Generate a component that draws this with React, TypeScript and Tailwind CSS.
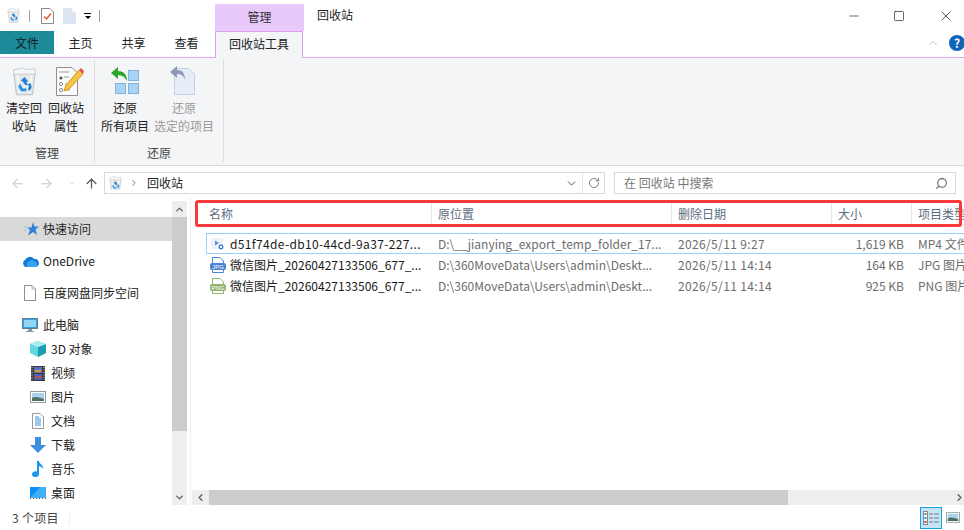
import { ChevronDown, ChevronLeft, ChevronRight, ChevronUp, ArrowLeft, ArrowRight, ArrowUp, RotateCw, Search, Minus, Square, X } from "lucide-react";

const font = "font-['Noto_Sans_CJK_SC','Noto_Sans',sans-serif]";

function RecycleBin({ size = 16 }: { size?: number }) {
  return (
    <svg width={size} height={size * 1.15} viewBox="0 0 28 32">
      <path d="M2 6 L26 6 L23 31 L5 31 Z" fill="#e4e8ea" stroke="#b4babf" />
      <path d="M2 3 L11 1 L17 3 L26 2 L26 8 L2 8 Z" fill="#f5f6f7" stroke="#c4c9cc" />
      <path d="M6 9 L9 29 M22 9 L19 29" stroke="#f7f8f9" strokeWidth="2" />
      <path d="M14 11 L18 16 L16 17 L18 20 L15 20 L12 16 L10 15 Z" fill="#1f7fd6" />
      <path d="M9 18 L12 24 L16 24 L16 27 L10 27 L7 22 Z" fill="#2a92e4" />
      <path d="M21 18 L22 23 L19 27 L18 24 L19 22 L18 19 Z" fill="#1f7fd6" />
    </svg>
  );
}

function DocCheck() {
  return (
    <svg width="13" height="16" viewBox="0 0 13 16">
      <path d="M.5.5H9L12.5 4V15.5H.5Z" fill="#fff" stroke="#8a8a8a" />
      <path d="M3 8.5L5.5 11L10 5.5" fill="none" stroke="#e2572b" strokeWidth="1.4" />
    </svg>
  );
}

function DocBlank({ w = 13, h = 16 }: { w?: number; h?: number }) {
  return (
    <svg width={w} height={h} viewBox="0 0 13 16">
      <path d="M0 0H9V4H13V16H0Z" fill="#dde5f3" />
      <path d="M9 0L13 4H9Z" fill="#f2f5fa" />
    </svg>
  );
}

function Properties() {
  return (
    <svg width="28" height="29" viewBox="0 0 28 29">
      <path d="M.5.5H16L21.5 6V28.5H.5Z" fill="#fafafa" stroke="#8f8f8f" />
      <path d="M3 5H13M8 10H13" stroke="#9a9a9a" />
      <circle cx="5" cy="11" r="1.6" fill="#555" />
      <circle cx="5" cy="17" r="1.6" fill="#fff" stroke="#888" />
      <circle cx="5" cy="23" r="1.6" fill="#fff" stroke="#888" />
      <path d="M9 17H12M9 23H14" stroke="#9a9a9a" />
      <path d="M23 3L27 7L13 22L8 24L10 18Z" fill="#f6c445" stroke="#d49a1f" />
      <path d="M23 3L25 1L28 4L27 7Z" fill="#e2574c" />
    </svg>
  );
}

function RestoreAll() {
  return (
    <svg width="28" height="27" viewBox="0 0 28 27">
      <rect x="17.500" y="3.500" width="10" height="10" fill="#a9d3f5" stroke="#7fb3e0" />
      <rect x="4.500" y="16.500" width="10" height="10" fill="#a9d3f5" stroke="#7fb3e0" />
      <rect x="17.500" y="16.500" width="10" height="10" fill="#a9d3f5" stroke="#7fb3e0" />
      <path d="M7 0L0 6L7 12V8C11 8 14 10 16 14C16 8 13 4 7 4Z" fill="#2ca52c" />
    </svg>
  );
}

function RestoreSelected() {
  return (
    <svg width="25" height="29" viewBox="0 0 25 29">
      <path d="M4.500 2.500H19L24.500 8V28.500H4.500Z" fill="#e6edf8" stroke="#c5d0e0" />
      <path d="M7 0L0 6L7 12V8C11 8 14 10 15 14C15 8 13 4 7 4Z" fill="#8c9bb5" />
    </svg>
  );
}

function RibbonButton({ icon, lines, disabled, width }: { icon: React.ReactNode; lines: string[]; disabled?: boolean; width: string }) {
  return (
    <div className={`flex flex-col items-center ${width}`}>
      <div className="flex h-[30px] items-end justify-center">{icon}</div>
      <div className={`mt-[3px] text-center text-[12px] leading-[18px] whitespace-nowrap ${disabled ? "text-[#9a9a9a]" : "text-[#222]"}`}>
        {lines.map((l) => (
          <div key={l}>{l}</div>
        ))}
      </div>
    </div>
  );
}

function Star() {
  return (
    <svg width="15" height="14" viewBox="0 0 15 14">
      <path d="M9 0L10.5 4.5H15L11.5 7.5L13 13L9 10L4 13.5L6 8L3 5.500H7.500Z" fill="#2f7fd6" />
      <path d="M0 5H3M0 8H3" stroke="#9cc4ee" />
    </svg>
  );
}

function Cloud() {
  return (
    <svg width="17" height="11" viewBox="0 0 17 11">
      <path d="M4 11A4 4 0 0 1 3.500 3.500A5 5 0 0 1 12 3A4 4 0 0 1 13.500 11Z" fill="#0f78d4" />
      <path d="M6 11A3 3 0 0 1 7 5.500A4 4 0 0 1 13.500 6A2.600 2.600 0 0 1 13.500 11Z" fill="#36a3ee" />
    </svg>
  );
}

function PlainDoc() {
  return (
    <svg width="12" height="16" viewBox="0 0 12 16">
      <path d="M.5.5H8L11.500 4V15.500H.5Z" fill="#fff" stroke="#8f8f8f" />
      <path d="M8 .5V4H11.500" fill="none" stroke="#b8b8b8" />
    </svg>
  );
}

function Monitor() {
  return (
    <svg width="16" height="15" viewBox="0 0 16 15">
      <rect x=".5" y=".5" width="15" height="10" fill="#2fa3e6" stroke="#6b7c8c" />
      <rect x="2" y="2" width="12" height="7" fill="#8fd6f7" />
      <path d="M6 11H10V13H12V14H4V13H6Z" fill="#8c98a3" />
    </svg>
  );
}

function Cube() {
  return (
    <svg width="16" height="16" viewBox="0 0 16 16">
      <path d="M8 0L16 3V12L8 16L0 12V3Z" fill="#62d6dc" />
      <path d="M8 6L16 3V12L8 16Z" fill="#1e9db0" />
      <path d="M8 0L16 3L8 6L0 3Z" fill="#a9eef0" />
    </svg>
  );
}

function Film() {
  return (
    <svg width="14" height="15" viewBox="0 0 14 15">
      <rect width="14" height="15" fill="#3b3b3b" />
      <rect x="3" y="1" width="8" height="6" fill="#5a6fc0" />
      <rect x="3" y="8" width="8" height="6" fill="#4a62b8" />
      <path d="M4 4H10V6H4Z" fill="#d0a030" />
      <path d="M4 10H10V12H4Z" fill="#c05040" />
      <path d="M1 1V14M13 1V14" stroke="#ddd" strokeDasharray="1 1.500" />
    </svg>
  );
}

function Picture({ w = 16, h = 12 }: { w?: number; h?: number }) {
  return (
    <svg width={w} height={h} viewBox="0 0 16 12">
      <rect x=".5" y=".5" width="15" height="11" fill="#fff" stroke="#9a9a9a" />
      <rect x="2" y="2" width="12" height="8" fill="#a9d3ee" />
      <path d="M2 7C5 5 9 6 14 8V10H2Z" fill="#4f6f62" />
    </svg>
  );
}

function TextDoc() {
  return (
    <svg width="12" height="16" viewBox="0 0 12 16">
      <path d="M.5.5H8L11.500 4V15.500H.5Z" fill="#fff" stroke="#999" />
      <path d="M3 4H7M3 6H9M3 8H9M3 10H9M3 12H9" stroke="#3a8fd8" />
    </svg>
  );
}

function Download() {
  return (
    <svg width="16" height="16" viewBox="0 0 16 16">
      <path d="M5 0H11V8H16L8 16L0 8H5Z" fill="#3f8fdf" />
    </svg>
  );
}

function Note() {
  return (
    <svg width="12" height="16" viewBox="0 0 12 16">
      <path d="M5 0H7C7 3 12 4 11 8C10 6 8.500 5.500 7 5V13A3.500 3 0 1 1 5 10.500Z" fill="#1a98ee" />
    </svg>
  );
}

function Desktop() {
  return (
    <svg width="16" height="12" viewBox="0 0 16 12">
      <rect width="16" height="11" fill="#1090ee" />
      <path d="M0 11L10 0H16V11Z" fill="#3fb0f7" />
      <path d="M0 11.500H16" stroke="#666" strokeDasharray="1 2" />
    </svg>
  );
}

function VideoFile() {
  return (
    <svg width="15" height="13" viewBox="0 0 15 13">
      <rect x="1" y="1" width="12" height="11" fill="#eef1f8" />
      <path d="M5 3.500L9 6L5 8.500Z" fill="#5c8fdc" />
      <circle cx="11" cy="10" r="1.800" fill="#fff" stroke="#2f72d0" strokeWidth="1.300" />
    </svg>
  );
}

function ImageFile({ color, label }: { color: string; label: string }) {
  return (
    <svg width="16" height="16" viewBox="0 0 16 16">
      <path d="M2.500.5H10L13.500 4V15.500H2.500Z" fill="#fff" stroke={color} />
      <rect x="0" y="6" width="16" height="7" rx="2" fill={color} />
      <text x="8" y="12" textAnchor="middle" fontSize="6" fontFamily="Liberation Sans" fill="#fff">
        {label}
      </text>
    </svg>
  );
}

const navItems = [
  { label: "快速访问", icon: <Star />, box: "pl-[24px]", iconBox: "w-[19px]", row: "mt-[19px] h-[24px] bg-[#d9d9d9]" },
  { label: "OneDrive", icon: <Cloud />, box: "pl-[22px]", iconBox: "w-[21px]", row: "mt-[8px] h-[24px]" },
  { label: "百度网盘同步空间", icon: <PlainDoc />, box: "pl-[24px]", iconBox: "w-[19px]", row: "mt-[8px] h-[24px]" },
  { label: "此电脑", icon: <Monitor />, box: "pl-[22px]", iconBox: "w-[21px]", row: "mt-[8px] h-[24px]" },
  { label: "3D 对象", icon: <Cube />, box: "pl-[30px]", iconBox: "w-[21px]", row: "h-[24px]" },
  { label: "视频", icon: <Film />, box: "pl-[31px]", iconBox: "w-[20px]", row: "h-[24px]" },
  { label: "图片", icon: <Picture />, box: "pl-[30px]", iconBox: "w-[21px]", row: "h-[24px]" },
  { label: "文档", icon: <TextDoc />, box: "pl-[32px]", iconBox: "w-[19px]", row: "h-[24px]" },
  { label: "下载", icon: <Download />, box: "pl-[30px]", iconBox: "w-[21px]", row: "h-[24px]" },
  { label: "音乐", icon: <Note />, box: "pl-[32px]", iconBox: "w-[19px]", row: "h-[24px]" },
  { label: "桌面", icon: <Desktop />, box: "pl-[30px]", iconBox: "w-[21px]", row: "h-[24px]" },
];

const files = [
  {
    icon: <VideoFile />,
    name: "d51f74de-db10-44cd-9a37-227...",
    path: "D:\\__jianying_export_temp_folder_17...",
    date: "2026/5/11 9:27",
    size: "1,619 KB",
    type: "MP4 文件",
    selected: true,
  },
  {
    icon: <ImageFile color="#4d84d6" label="JPG" />,
    name: "微信图片_20260427133506_677_...",
    path: "D:\\360MoveData\\Users\\admin\\Deskt...",
    date: "2026/5/11 14:14",
    size: "164 KB",
    type: "JPG 图片文件",
  },
  {
    icon: <ImageFile color="#8fb56f" label="PNG" />,
    name: "微信图片_20260427133506_677_...",
    path: "D:\\360MoveData\\Users\\admin\\Deskt...",
    date: "2026/5/11 14:14",
    size: "925 KB",
    type: "PNG 图片文件",
  },
];

export default function App() {
  return (
    <div className={`flex h-[530px] w-[964px] flex-col overflow-hidden bg-white text-[12px] text-[#222] ${font}`}>
      {/* title bar */}
      <div className="flex h-[31px] shrink-0 items-center">
        <div className="flex w-[215px] items-center pl-[7px]">
          <RecycleBin size={13} />
          <div className="ml-[9px] h-[12px] w-px bg-[#a0a0a0]" />
          <div className="ml-[11px]"><DocCheck /></div>
          <div className="ml-[9px]"><DocBlank /></div>
          <div className="ml-[8px] mt-[2px] h-[7px] w-[7px] border-t-[1px] border-black">
            <div className="mt-[2px] ml-[1px] h-0 w-0 border-x-[3px] border-t-[3px] border-x-transparent border-t-black" />
          </div>
          <div className="ml-[8px] h-[12px] w-px bg-[#a0a0a0]" />
        </div>
        <div className="mt-[4px] flex h-[27px] w-[89px] items-center justify-center bg-[#e9c9fb] pb-[2px] text-[#333]">管理</div>
        <div className="ml-[13px] mb-[1px] text-[#222]">回收站</div>
        <div className="ml-auto flex items-center pr-[10px]">
          <Minus size={14} strokeWidth={1} className="text-black" />
          <Square size={12} strokeWidth={1.2} className="ml-[32px] text-black" />
          <X size={16} strokeWidth={1} className="ml-[33px] text-black" />
        </div>
      </div>

      {/* tabs */}
      <div className="relative flex h-[27px] shrink-0 border-b border-[#e3a5f0]">
        <div className="mb-[3px] flex w-[54px] items-center justify-center bg-[#1c8a99] text-[#0c1c20]">文件</div>
        <div className="flex w-[53px] items-center justify-center pb-[3px]">主页</div>
        <div className="flex w-[53px] items-center justify-center pb-[3px]">共享</div>
        <div className="flex w-[53px] items-center justify-center pb-[3px]">查看</div>
        <div className="-mb-px ml-[2px] flex w-[88px] items-center justify-center border-x border-t border-[#dca0ee] bg-[#f4f5f7] pb-[3px]">回收站工具</div>
        <div className="ml-auto flex items-center pb-[3px]">
          <ChevronUp size={14} strokeWidth={1} className="text-[#a0a0a0]" />
          <div className="ml-[9px] flex h-[16px] w-[16px] shrink-0 -mr-[1px] items-center justify-center rounded-full bg-[#0f64b8] text-[12px] font-bold text-white">?</div>
        </div>
      </div>

      {/* ribbon */}
      <div className="flex h-[108px] shrink-0 border-b border-[#d9d9d9] bg-[#f4f5f7] pt-[2px]">
        <div className="flex h-[102px] w-[95px] flex-col border-r border-[#dcdcdc] pt-[6px]">
          <div className="flex h-[76px] pl-[5px]">
            <RibbonButton width="w-[38px]" icon={<RecycleBin size={25} />} lines={["清空回", "收站"]} />
            <div className="ml-[4px]">
              <RibbonButton width="w-[38px]" icon={<div className="ml-[8px]"><Properties /></div>} lines={["回收站", "属性"]} />
            </div>
          </div>
          <div className="mt-[7px] text-center text-[#444]">管理</div>
        </div>
        <div className="flex h-[102px] w-[129px] flex-col border-r border-[#dcdcdc] pt-[6px]">
          <div className="flex h-[76px] pl-[6px]">
            <RibbonButton width="w-[48px]" icon={<div className="mb-[2px]"><RestoreAll /></div>} lines={["还原", "所有项目"]} />
            <div className="ml-[5px]">
              <RibbonButton width="w-[60px]" disabled icon={<div className="mr-[3px] mb-[1px]"><RestoreSelected /></div>} lines={["还原", "选定的项目"]} />
            </div>
          </div>
          <div className="mt-[7px] text-center text-[#444]">还原</div>
        </div>
      </div>

      {/* address row */}
      <div className="flex h-[32px] shrink-0 items-center pt-[2px]">
        <ArrowLeft size={15} strokeWidth={2} className="ml-[10px] text-[#d0d0d0]" />
        <ArrowRight size={15} strokeWidth={2} className="ml-[14px] text-[#d0d0d0]" />
        <ChevronDown size={10} strokeWidth={2} className="ml-[13px] text-[#d0d0d0]" />
        <ArrowUp size={15} strokeWidth={2} className="ml-[7px] text-[#555]" />
        <div className="ml-[5px] flex h-[22px] w-[501px] items-center border border-[#d9d9d9] pl-[4px]">
          <RecycleBin size={13} />
          <ChevronRight size={10} strokeWidth={2} className="ml-[7px] text-[#666]" />
          <span className="ml-[8px]">回收站</span>
          <ChevronDown size={13} strokeWidth={1.5} className="ml-auto mr-[2px] text-[#333]" />
          <div className="mx-[2px] h-full w-px bg-[#e5e5e5]" />
          <RotateCw size={12} strokeWidth={1.5} className="ml-[3px] mr-[4px] text-[#555]" />
        </div>
        <div className="ml-[9px] flex h-[22px] w-[342px] items-center border border-[#d9d9d9] pl-[9px] text-[#777]">
          在 回收站 中搜索
          <Search size={13} strokeWidth={2} className="ml-auto mr-[7px] -scale-x-100 text-[#666]" />
        </div>
      </div>

      {/* body */}
      <div className="flex min-h-0 flex-1">
        <div className="w-[172px] shrink-0 overflow-hidden">
          {navItems.map((item) => (
            <div key={item.label} className={`flex items-center ${item.row} ${item.box}`}>
              <div className={`flex shrink-0 items-center justify-start ${item.iconBox}`}>{item.icon}</div>
              <span className="whitespace-nowrap">{item.label}</span>
            </div>
          ))}
        </div>
        <div className="mt-[3px] flex w-[15px] shrink-0 flex-col bg-[#eeeeee]">
          <div className="flex h-[16px] items-center justify-center">
            <ChevronUp size={11} strokeWidth={3} className="text-[#606060]" />
          </div>
          <div className="h-[214px] bg-[#cccccc]" />
          <div className="mt-auto flex h-[16px] items-center justify-center">
            <ChevronDown size={11} strokeWidth={3} className="text-[#606060]" />
          </div>
        </div>
        <div className="ml-[3px] w-px shrink-0 bg-[#ededed]" />
        <div className="relative flex min-w-0 flex-1 flex-col overflow-hidden pl-[1px]">
          {/* headers */}
          <div className="mt-[4px] flex h-[24px] shrink-0 text-[#5c6c80]">
            <div className="flex w-[239px] shrink-0 items-center pl-[17px]">名称</div>
            <div className="flex w-[240px] shrink-0 items-center border-l border-[#e5e5e5] pl-[6px]">原位置</div>
            <div className="flex w-[160px] shrink-0 items-center border-l border-[#e5e5e5] pl-[6px]">删除日期</div>
            <div className="flex w-[80px] shrink-0 items-center border-l border-[#e5e5e5] pl-[6px]">大小</div>
            <div className="flex flex-1 items-center whitespace-nowrap border-l border-[#e5e5e5] pl-[6px]">项目类型</div>
          </div>
          {/* sort indicator and red marker */}
          <ChevronUp size={8} strokeWidth={2} className="absolute left-[122px] top-0 text-[#999]" />
          <div className="pointer-events-none absolute left-[4px] right-[2px] top-[2px] h-[27px] rounded-[3px] border-[3px] border-[#f83a3a]" />

          {/* rows */}
          <div className="mt-[7px] flex-1">
            {files.map((f) => (
              <div
                key={f.type}
                className={`ml-[14px] flex h-[21px] items-center whitespace-nowrap text-[#6d6d6d] ${f.selected ? "border border-r-0 border-[#99d1ff]" : "border border-transparent"}`}
              >
                <div className="flex w-[23px] shrink-0 justify-start pl-[3px]">{f.icon}</div>
                <div className={`w-[208px] shrink-0 overflow-hidden text-[#1a1a1a] ${f.selected ? "tracking-[0.35px]" : ""}`}>{f.name}</div>
                <div className="w-[240px] shrink-0 overflow-hidden">{f.path}</div>
                <div className="w-[140px] shrink-0 tracking-[0.35px]">{f.date}</div>
                <div className="w-[86px] shrink-0 text-right">{f.size}</div>
                <div className="ml-[14px] shrink-0">{f.type}</div>
              </div>
            ))}
          </div>

          {/* horizontal scrollbar */}
          <div className="flex h-[15px] shrink-0 bg-[#eeeeee]">
            <div className="flex w-[17px] items-center justify-center">
              <ChevronLeft size={11} strokeWidth={3} className="text-[#606060]" />
            </div>
            <div className="w-[579px] bg-[#cccccc]" />
            <div className="ml-auto flex w-[10px] items-center justify-center">
              <ChevronRight size={11} strokeWidth={3} className="shrink-0 text-[#606060]" />
            </div>
          </div>
        </div>
      </div>

      {/* status bar */}
      <div className="flex h-[25px] shrink-0 items-center pl-[12px] text-[#444]">
        <span className="tracking-[0.3px]">3 个项目</span>
        <div className="ml-[10px] h-[14px] w-px bg-[#eeeeee]" />
        <div className="ml-auto flex h-[22px] w-[22px] items-center justify-center border border-[#1ba1e2] bg-[#c5e4f7]">
          <svg width="16" height="16" viewBox="0 0 16 16">
            <rect x=".5" y="1.500" width="4" height="13" fill="#fff" stroke="#888" />
            <rect x="1.500" y="3" width="2" height="2" fill="#777" />
            <rect x="1.500" y="7" width="2" height="2" fill="#3a8fd8" />
            <rect x="1.500" y="11" width="2" height="2" fill="#c0392b" />
            <path d="M6 4H10M11 4H16M6 8H10M11 8H16M6 12H10M11 12H16" stroke="#777" />
          </svg>
        </div>
        <div className="ml-[4px] mr-[4px]"><Picture w={14} h={11} /></div>
      </div>
    </div>
  );
}
